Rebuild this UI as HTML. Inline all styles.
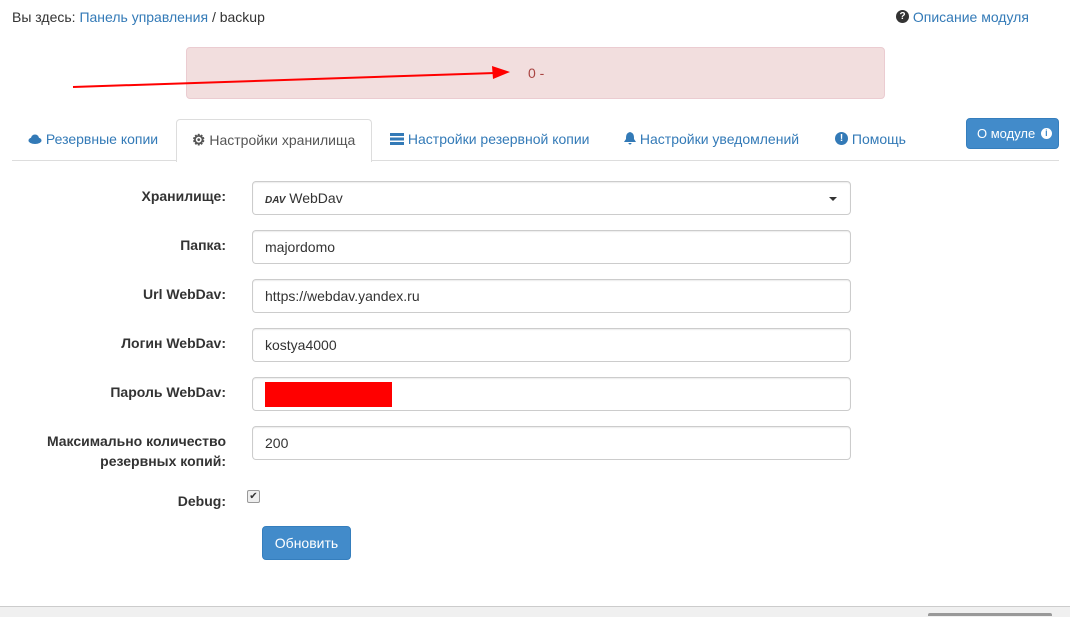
<!DOCTYPE html>
<html><head><meta charset="utf-8"><style>
body{margin:0;width:1070px;height:616px;overflow:hidden;background:#fff;font-family:"Liberation Sans",sans-serif;font-size:14px;color:#333;position:relative}
.a{position:absolute}
a{color:#337ab7;text-decoration:none}
.lbl{position:absolute;right:844px;font-weight:bold;text-align:right;line-height:20px}
.inp{position:absolute;left:252px;border:1px solid #ccc;border-radius:4px;box-shadow:inset 0 1px 1px rgba(0,0,0,.075);line-height:32px;padding-left:12px;box-sizing:border-box;width:599px;height:34px}
.tab{position:absolute;top:131px;color:#337ab7;white-space:nowrap}
.ci{display:inline-block;width:13px;height:13px;border-radius:50%;color:#fff;font-size:10px;font-weight:bold;text-align:center;line-height:13px;vertical-align:middle;position:relative;top:-2px}
</style></head><body>
<div class="a" style="left:12px;top:9px">Вы здесь: <a>Панель управления</a> / backup</div>
<div class="a" style="left:896px;top:9px"><span class="ci" style="background:#333">?</span> <a>Описание модуля</a></div>
<div class="a" style="left:186px;top:47px;width:697px;height:50px;background:#f2dede;border:1px solid #ebccd1;border-radius:4px"></div>
<div class="a" style="left:528px;top:65px;color:#a94442">0 -</div>
<svg class="a" style="left:0;top:0" width="600" height="100"><line x1="73" y1="87" x2="495" y2="73" stroke="#f00" stroke-width="2"/><polygon points="510,72 492,66 493,79" fill="#f00"/></svg>
<div class="a" style="left:12px;top:160px;width:1047px;border-top:1px solid #ddd"></div>
<div class="a" style="left:176px;top:119px;width:194px;height:42px;border:1px solid #ddd;border-bottom:none;border-radius:4px 4px 0 0;background:#fff"></div>
<div class="tab" style="left:28px"><svg width="14" height="10" style="vertical-align:0"><ellipse cx="7" cy="6.5" rx="6.5" ry="3.5" fill="#337ab7"/><circle cx="7" cy="4.5" r="4" fill="#337ab7"/></svg> Резервные копии</div>
<div class="tab" style="left:192px;color:#555"><span style="font-size:15px;font-weight:bold">⚙</span> Настройки хранилища</div>
<div class="tab" style="left:390px"><svg width="14" height="12" style="vertical-align:-1px"><rect x="0" y="0" width="14" height="3" fill="#337ab7"/><rect x="0" y="4.5" width="14" height="3" fill="#337ab7"/><rect x="0" y="9" width="14" height="3" fill="#337ab7"/></svg> Настройки резервной копии</div>
<div class="tab" style="left:624px"><svg width="12" height="13" style="vertical-align:-1px"><path d="M6 0 C2 1 2 4 2 7 L0 10 L12 10 L10 7 C10 4 10 1 6 0Z M4.5 11 A1.5 1.5 0 0 0 7.5 11Z" fill="#337ab7"/></svg> Настройки уведомлений</div>
<div class="tab" style="left:835px"><span class="ci" style="background:#337ab7">!</span> Помощь</div>
<div class="a" style="left:966px;top:118px;width:93px;height:31px;background:#428bca;border:1px solid #357ebd;border-radius:4px;box-sizing:border-box;color:#fff;font-size:13px;line-height:29px;padding-left:10px;white-space:nowrap">О модуле <span class="ci" style="background:#fff;color:#428bca;width:11px;height:11px;line-height:11px;font-size:9px;margin-left:2px;top:-1px">i</span></div>

<div class="lbl" style="top:186px">Хранилище:</div>
<div class="inp" style="top:181px"><b style="font-size:10px;font-style:italic">DAV</b> WebDav<span style="position:absolute;right:13px;top:15px;border-left:4px solid transparent;border-right:4px solid transparent;border-top:4px solid #333"></span></div>
<div class="lbl" style="top:235px">Папка:</div>
<div class="inp" style="top:230px">majordomo</div>
<div class="lbl" style="top:284px">Url WebDav:</div>
<div class="inp" style="top:279px">https://webdav.yandex.ru</div>
<div class="lbl" style="top:333px">Логин WebDav:</div>
<div class="inp" style="top:328px">kostya4000</div>
<div class="lbl" style="top:382px">Пароль WebDav:</div>
<div class="inp" style="top:377px"></div>
<div class="a" style="left:265px;top:382px;width:127px;height:25px;background:#f00"></div>
<div class="lbl" style="top:431px">Максимально количество<br>резервных копий:</div>
<div class="inp" style="top:426px">200</div>
<div class="lbl" style="top:491px">Debug:</div>
<div class="a" style="left:247px;top:490px;width:11px;height:11px;border:1px solid #999;border-radius:2px;background:#eee;font-size:10px;line-height:11px;text-align:center">✔</div>
<div class="a" style="left:262px;top:526px;width:89px;height:34px;background:#428bca;border:1px solid #357ebd;border-radius:4px;box-sizing:border-box;color:#fff;line-height:32px;text-align:center">Обновить</div>
<div class="a" style="left:0;top:606px;width:1070px;height:10px;background:#f0f0f0;border-top:1px solid #ccc"></div>
<div class="a" style="left:928px;top:613px;width:124px;height:3px;background:#999;border-radius:2px 2px 0 0"></div>
</body></html>
